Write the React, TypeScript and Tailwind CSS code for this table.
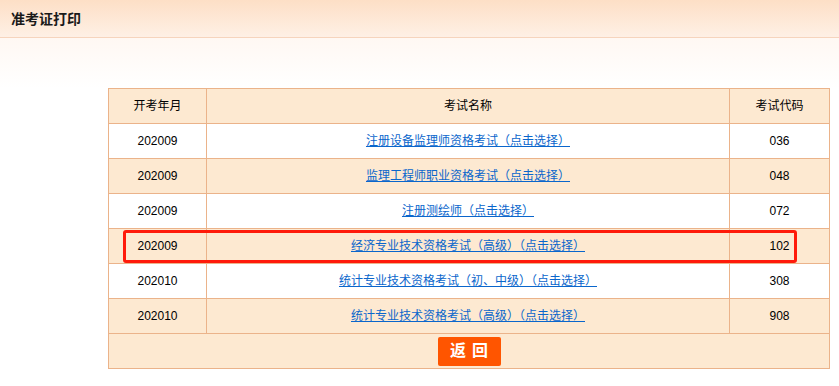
import React from "react";

const rows = [
  { m: "202009", name: "注册设备监理师资格考试（点击选择）", code: "036" },
  { m: "202009", name: "监理工程师职业资格考试（点击选择）", code: "048" },
  { m: "202009", name: "注册测绘师（点击选择）", code: "072" },
  { m: "202009", name: "经济专业技术资格考试（高级）（点击选择）", code: "102" },
  { m: "202010", name: "统计专业技术资格考试（初、中级）（点击选择）", code: "308" },
  { m: "202010", name: "统计专业技术资格考试（高级）（点击选择）", code: "908" },
];

export default function App() {
  const font = { fontFamily: '"Liberation Sans", "Noto Sans CJK SC", sans-serif' };
  return (
    <div className="w-[839px] h-[386px] bg-white overflow-hidden text-black" style={font}>
      <div className="h-[38px] border-b border-[#f6d4bd] flex items-center pl-[11px] bg-gradient-to-b from-[#fddfc6] to-[#fef0e5]">
        <span className="text-[14px] font-bold text-[#1a1a1a] leading-none">准考证打印</span>
      </div>
      <div className="h-[50px] bg-gradient-to-b from-[#fff8f3] to-white" />
      <div className="relative ml-[108px] w-[722px]">
        <table className="w-full border-collapse border border-[#ebb38a] text-[12px]">
          <colgroup>
            <col className="w-[98px]" />
            <col className="w-[523px]" />
            <col />
          </colgroup>
          <thead>
            <tr className="bg-[#fde9d1]">
              <th className="h-[35px] p-0 border border-[#ebb38a] font-normal">开考年月</th>
              <th className="h-[35px] p-0 border border-[#ebb38a] font-normal">考试名称</th>
              <th className="h-[35px] p-0 border border-[#ebb38a] font-normal">考试代码</th>
            </tr>
          </thead>
          <tbody>
            {rows.map((r, i) => (
              <tr key={i} className={i % 2 === 0 ? "bg-white" : "bg-[#fde9d1]"}>
                <td className="h-[35px] p-0 border border-[#ebb38a] text-center">{r.m}</td>
                <td className="h-[35px] p-0 border border-[#ebb38a] text-center">
                  <a href="#" className="text-[#0a66cc] underline">{r.name}</a>
                </td>
                <td className="h-[35px] p-0 border border-[#ebb38a] text-center">{r.code}</td>
              </tr>
            ))}
            <tr className="bg-[#fde9d1]">
              <td colSpan={3} className="h-[35px] p-0 border border-[#ebb38a] text-center align-middle">
                <button className="w-[63px] h-[29px] rounded-[2px] bg-[#ff5500] text-white text-[16px] font-bold leading-none align-middle tracking-[6px] pl-[6px]">
                  返回
                </button>
              </td>
            </tr>
          </tbody>
        </table>
        <div className="absolute left-[15px] top-[142px] w-[674px] h-[33px] border-[3px] border-[#ff1a0a] rounded-[3px] pointer-events-none" />
      </div>
    </div>
  );
}
